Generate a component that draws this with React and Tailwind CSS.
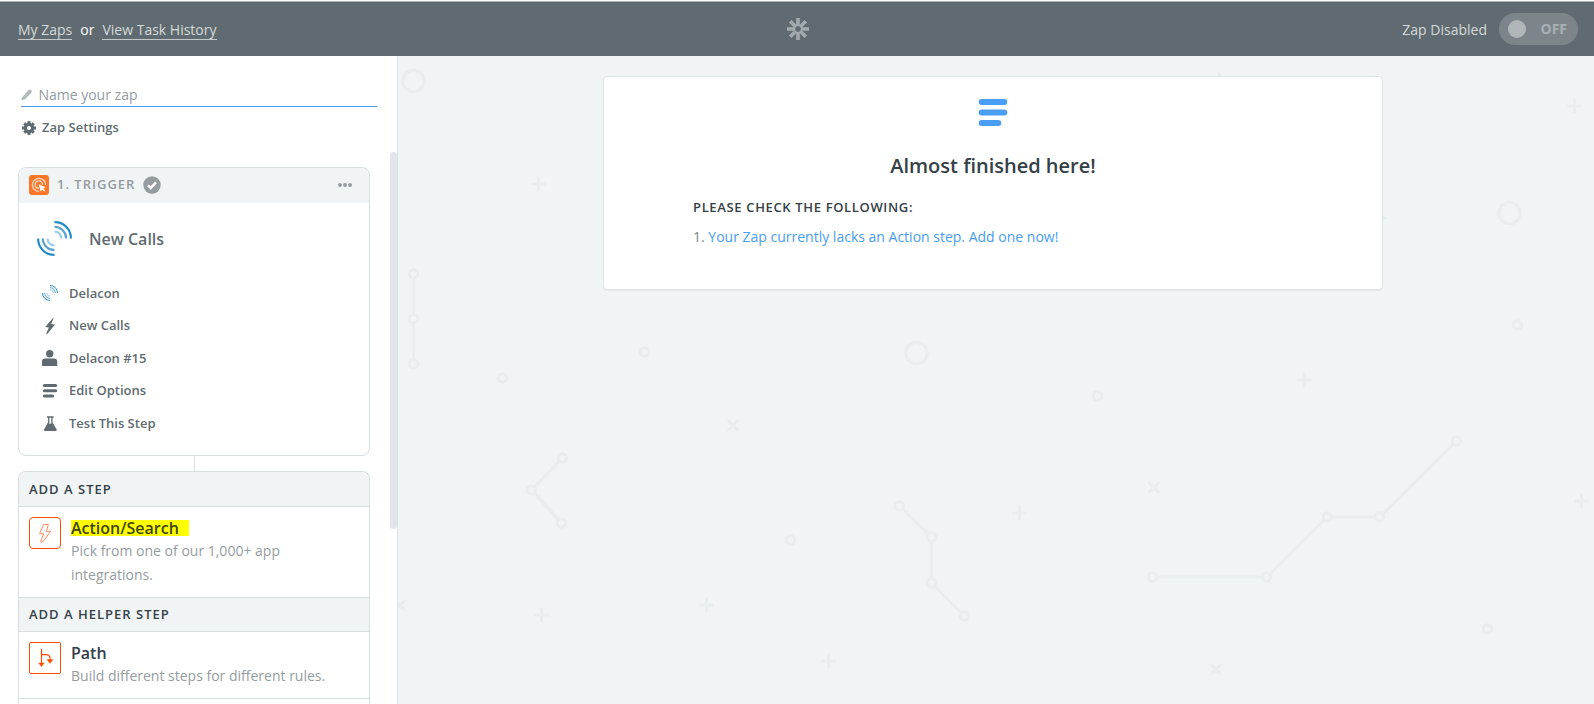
const PLUSES = [
  [538, 184], [1574, 106], [541, 615], [706, 605], [828, 661],
  [1304, 380], [1019, 513], [1581, 501], [1379, 218], [1219, 80],
];
const CROSSES = [[732, 425], [399, 605], [1153, 487], [1215, 669]];
const DOTS = [[644, 352], [502, 378], [790, 540], [1517, 325], [1097, 396], [1487, 629]];
const RINGS = [[413, 81], [916, 353], [1509, 213]];
const CHAINS = [
  [[413, 274], [413, 319], [413, 364]],
  [[562, 458], [531, 490], [561, 523]],
  [[899, 506], [931, 537], [931, 583], [964, 616]],
  [[1152, 577], [1266, 577], [1327, 517], [1379, 517], [1456, 441]],
];

function Backdrop() {
  return (
    <svg aria-hidden="true" className="absolute inset-0 h-full w-full" fill="#f0f4f5" stroke="#e8edee" strokeWidth="3" strokeLinecap="round">
      <g transform="translate(-397.5 -56)">
        {PLUSES.map(([x, y]) => (
          <path key={`${x}-${y}`} d={`M${x - 6} ${y}h12M${x} ${y - 6}v12`} />
        ))}
        {CROSSES.map(([x, y]) => (
          <path key={`${x}-${y}`} d={`M${x - 4} ${y - 4}l9 9m0-9l-9 9`} />
        ))}
        {CHAINS.map((points) => (
          <g key={points[0].join("-")}>
            <polyline points={points.join(" ")} fill="none" />
            {points.map(([x, y]) => (
              <circle key={`${x}-${y}`} cx={x} cy={y} r="4.3" />
            ))}
          </g>
        ))}
        {DOTS.map(([x, y]) => (
          <circle key={`${x}-${y}`} cx={x} cy={y} r="4.3" />
        ))}
        {RINGS.map(([x, y]) => (
          <circle key={`${x}-${y}`} cx={x} cy={y} r="10.7" />
        ))}
      </g>
    </svg>
  );
}

function ZapierMark() {
  return (
    <svg viewBox="0 0 22 22" className="size-[22px]" stroke="#a3aaad" strokeWidth="3.6" aria-hidden="true">
      {[0, 45, 90, 135, 180, 225, 270, 315].map((angle) => (
        <path key={angle} d="M11 0v8.2" transform={`rotate(${angle} 11 11)`} />
      ))}
    </svg>
  );
}

function DelaconMark({ className }) {
  return (
    <svg viewBox="0 0 36 36" className={className} fill="none" strokeWidth="2.2" aria-hidden="true">
      <path d="M18 1.2A16.3 16.3 0 0 1 34.8 18M1.2 18A16.3 16.3 0 0 0 18 34.8" stroke="#1e8bc9" />
      <path d="M18 6A12 12 0 0 1 30 18M6 18A12 12 0 0 0 18 30" stroke="#5ba3cc" />
      <path d="M18 10.8A7.2 7.2 0 0 1 25.2 18M10.8 18A7.2 7.2 0 0 0 18 25.2" stroke="#9accec" />
    </svg>
  );
}

function TriggerIcon() {
  return (
    <svg viewBox="0 0 20 20" className="size-5" fill="none" aria-hidden="true">
      <rect width="20" height="20" rx="3" fill="#ff7629" />
      <g stroke="#ffd9c2" strokeWidth="1.3">
        <path d="M10 16.5A6.6 6.6 0 1 1 16.6 10" />
        <path d="M10 13.3A3.7 3.7 0 1 1 13.5 9.8" />
      </g>
      <path d="M9.6 9.2l7.2 3-2.6 1.1 2.1 2.2-1.2 1.1-2.1-2.2-1.2 2.4z" fill="#fff" />
    </svg>
  );
}

function CheckIcon() {
  return (
    <svg viewBox="0 0 18 18" className="size-[18px]" role="img" aria-label="Complete">
      <circle cx="9" cy="9" r="8.7" fill="#959c9f" />
      <path d="M5 9.3l2.7 2.7 5.3-5.6" fill="none" stroke="#fff" strokeWidth="2.5" />
    </svg>
  );
}

function PencilIcon() {
  return (
    <svg viewBox="0 0 12 12" className="size-3" fill="#b4babc" aria-hidden="true">
      <path d="M0.3 11.8l0.9-3.4L7.4 1.2Q9-0.4 10.5 0.8T11 3.6L4.2 10.4z" />
    </svg>
  );
}

function GearIcon() {
  return (
    <svg viewBox="0 0 14 14" className="size-3.5" aria-hidden="true">
      <g stroke="#5f6b70" strokeWidth="3">
        <path d="M7 0v14M0 7h14M2.2 2.2l9.6 9.6M11.8 2.2l-9.6 9.6" />
      </g>
      <circle cx="7" cy="7" r="5.2" fill="#5f6b70" />
      <circle cx="7" cy="7" r="2.1" fill="#fff" />
    </svg>
  );
}

function BoltIcon() {
  return (
    <svg viewBox="0 0 16 16" className="size-4" fill="#5f6b70" aria-hidden="true">
      <path d="M11 0L3.2 9l3.7 0.6-2.7 6.2 1.1 0.2L13 6.5 9.2 5.9l2.4-5.7z" />
    </svg>
  );
}

function UserIcon() {
  return (
    <svg viewBox="0 0 16 16" className="size-4" fill="#5f6b70" aria-hidden="true">
      <circle cx="7.7" cy="3.7" r="3.7" />
      <path d="M0 16v-4.4Q0 8.6 3 8.6h9q3.2 0 3.2 3V16z" />
    </svg>
  );
}

function BarsIcon({ className }) {
  return (
    <svg viewBox="0 0 30 28" className={className} fill="currentColor" aria-hidden="true">
      <rect x="0.7" y="0" width="28.6" height="6" rx="3" />
      <rect x="0.7" y="10.6" width="28.6" height="6" rx="3" />
      <rect x="0.7" y="21" width="22.6" height="6" rx="3" />
    </svg>
  );
}

function FlaskIcon() {
  return (
    <svg viewBox="0 0 16 16" className="size-4" aria-hidden="true">
      <path d="M5 1h6.6M6.7 1v5.4L3.4 13M9.9 1v5.4l3.3 6.6" fill="none" stroke="#5f6b70" strokeWidth="1.3" />
      <path d="M5.8 7.4h5l3.9 6.2q0.5 1.4-1 1.4H3q-1.5 0-1-1.4z" fill="#5f6b70" />
    </svg>
  );
}

function OutlineBoltIcon() {
  return (
    <svg viewBox="0 0 32 32" className="size-8 shrink-0" fill="none" aria-hidden="true">
      <rect x="0.5" y="0.5" width="31" height="31" rx="3.5" stroke="#ff4a00" />
      <path d="M19.4 7.4l-4.8 0.3-4 9h4l-3 8.2 2 0.2 8-10.8h-4.2z" stroke="#ff8a5e" strokeLinejoin="round" />
    </svg>
  );
}

function PathIcon() {
  return (
    <svg viewBox="0 0 32 32" className="size-8 shrink-0" fill="none" aria-hidden="true">
      <rect x="0.5" y="0.5" width="31" height="31" rx="1.5" stroke="#ff4a00" />
      <path d="M12.5 7v15M12.5 12.6h4.5q4 0 4 4v2" stroke="#ff4a00" strokeWidth="1.2" />
      <path d="M9.8 21h5.4l-2.7 3.6zM18.2 17.6h5.6L21 21.4z" fill="#ff4a00" stroke="#ff4a00" strokeWidth="0.5" />
    </svg>
  );
}

const STEP_LINKS = [
  { label: "Delacon", icon: <DelaconMark className="size-4" /> },
  { label: "New Calls", icon: <BoltIcon /> },
  { label: "Delacon #15", icon: <UserIcon /> },
  { label: "Edit Options", icon: <BarsIcon className="h-3.5 w-4" /> },
  { label: "Test This Step", icon: <FlaskIcon /> },
];

function Header() {
  const link = "border-b border-[#c3c8ca] leading-[18px] text-[#d5d9da]";
  return (
    <header className="grid h-14 shrink-0 grid-cols-[1fr_auto_1fr] items-center border-t border-white bg-[#5f6b70] px-4 pt-px pl-[18px] text-sm shadow-[inset_0_1px_0_#a9b0b3]">
      <nav className="flex items-center gap-2 pt-0.5 text-white">
        <a href="#zaps" className={link}>My Zaps</a>
        <span>or</span>
        <a href="#history" className={link}>View Task History</a>
      </nav>
      <ZapierMark />
      <div className="flex items-center justify-end gap-3">
        <span id="zap-state" className="pt-0.5 text-[#d5d9da]">Zap Disabled</span>
        <button type="button" role="switch" aria-checked="false" aria-labelledby="zap-state" className="flex h-8 w-[79px] items-center justify-between rounded-full bg-[#7d858a] pr-[11px] pl-[9px] font-bold text-[#a9b0b3]">
          <span className="size-[18px] rounded-full bg-[#b1b6b9]" />
          OFF
        </button>
      </div>
    </header>
  );
}

function StepHeading({ children, className }) {
  return (
    <h2 className={`flex items-center border-b border-[#d7dedf] bg-[#f0f4f5] px-2.5 text-[13px] font-semibold tracking-[1px] text-[#354046] ${className}`}>
      {children}
    </h2>
  );
}

function StepOption({ icon, title, highlighted, children }) {
  return (
    <button type="button" className="flex w-full items-start gap-2.5 border-b border-[#d7dedf] px-2.5 py-2.5 text-left">
      {icon}
      <span className="flex flex-col items-start">
        <span className={`my-[3px] text-base leading-4 font-semibold ${highlighted ? "bg-[#ffff00] pr-2.5 text-[#40450a]" : "text-[#354046]"}`}>{title}</span>
        <span className="text-sm leading-6 text-[#959c9f]">{children}</span>
      </span>
    </button>
  );
}

function Sidebar() {
  return (
    <aside className="relative w-[398px] shrink-0 overflow-hidden border-r border-[#dde2e4] bg-white">
      <div className="flex flex-col pt-6 pr-5 pl-[21px]">
        <label className="flex h-[27px] items-center gap-1.5 border-b border-[#499df3] pt-[3px]">
          <PencilIcon />
          <input type="text" aria-label="Zap name" placeholder="Name your zap" className="w-full text-sm outline-none placeholder:text-[#959c9f]" />
        </label>
        <button type="button" className="mt-[11px] flex h-5 items-center gap-1.5 pl-px text-[13px] font-semibold text-[#5f6b70]">
          <GearIcon />
          Zap Settings
        </button>
      </div>

      <div className="mt-[29px] pr-[27px] pl-[18px]">
        <section className="rounded-lg border border-[#d7dedf] pb-[15px]">
          <div className="flex h-[35px] items-center gap-2 rounded-t-lg bg-[#f0f4f5] px-2.5 pb-px">
            <TriggerIcon />
            <h2 className="text-[13px] font-semibold tracking-[1px] text-[#959c9f]">1. TRIGGER</h2>
            <CheckIcon />
            <button type="button" aria-label="Step options" className="ml-auto flex gap-px px-[7px] py-1">
              <span className="size-1 rounded-full bg-[#959c9f]" />
              <span className="size-1 rounded-full bg-[#959c9f]" />
              <span className="size-1 rounded-full bg-[#959c9f]" />
            </button>
          </div>
          <div className="flex h-[74px] items-center gap-[17px] px-[18px] pb-[3px]">
            <DelaconMark className="size-[35px]" />
            <h3 className="text-base font-semibold text-[#5f6b70]">New Calls</h3>
          </div>
          <ul className="grid h-[163px] auto-rows-fr pl-[23px]">
            {STEP_LINKS.map(({ label, icon }) => (
              <li key={label} className="flex items-center">
                <a href="#step" className="flex items-center gap-[11px] text-[13px] font-semibold text-[#5f6b70]">
                  {icon}
                  {label}
                </a>
              </li>
            ))}
          </ul>
        </section>

        <div className="mx-auto h-[15px] w-px bg-[#d7dedf]" />

        <section className="rounded-t-lg border border-b-0 border-[#d7dedf]">
          <StepHeading className="h-[35px] rounded-t-lg pt-px">ADD A STEP</StepHeading>
          <StepOption icon={<OutlineBoltIcon />} title="Action/Search" highlighted>
            Pick from one of our 1,000+ app integrations.
          </StepOption>
          <StepHeading className="h-[34px]">ADD A HELPER STEP</StepHeading>
          <StepOption icon={<PathIcon />} title="Path">
            Build different steps for different rules.
          </StepOption>
          <div className="h-12" />
        </section>
      </div>

      <div aria-hidden="true" className="absolute top-24 right-0 h-[377px] w-[7px] rounded-full bg-[#e2e6e8]" />
    </aside>
  );
}

export default function App() {
  return (
    <div className="flex h-screen flex-col bg-[#f0f4f5] font-['Open_Sans',sans-serif]">
      <Header />
      <div className="flex min-h-0 grow">
        <Sidebar />
        <main className="relative grow pt-5 pr-1.5">
          <Backdrop />
          <section className="relative mx-auto max-w-[780px] rounded border border-[#dfe4e7] bg-white px-[89px] pt-[22px] pb-[42px] shadow-2xs">
            <BarsIcon className="mx-auto h-7 w-[30px] text-[#499df3]" />
            <h1 className="mt-[25px] text-center text-xl leading-7 font-semibold text-[#354046]">Almost finished here!</h1>
            <h2 className="mt-[17px] text-[13px] leading-5 font-semibold tracking-wider text-[#354046]">PLEASE CHECK THE FOLLOWING:</h2>
            <ol className="mt-2.5 text-sm leading-5 text-[#7c8588]">
              <li>
                1. <a href="#add" className="text-[#499df3]">Your Zap currently lacks an Action step. Add one now!</a>
              </li>
            </ol>
          </section>
        </main>
      </div>
    </div>
  );
}
